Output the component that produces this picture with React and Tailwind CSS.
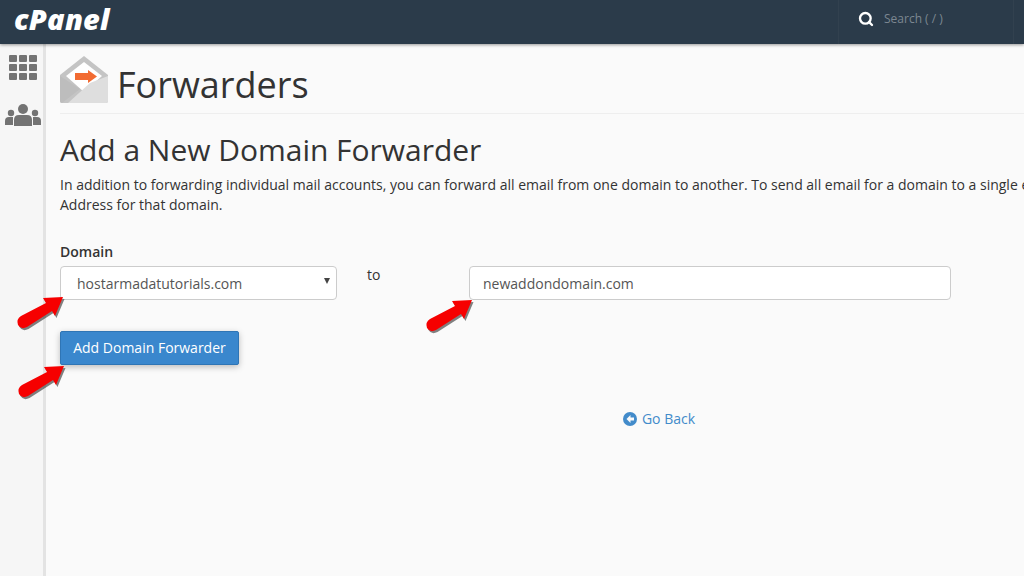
import { Search } from 'lucide-react'

// red callout arrow, tip at top right of its box
const ARROW_PATH = 'M5 22 L30 9 L27 4 L47 3 L39 22 L36 17 L11 33 Q5 36 2 31 Q0 25 5 22 Z'

const Arrow = ({ className }) => (
  <svg className={`absolute ${className}`} width="50" height="38" viewBox="0 0 50 38">
    <path d={ARROW_PATH} fill="#2e2e2e" opacity="0.6" transform="translate(1.5 2)" />
    <path d={ARROW_PATH} fill="#f60000" />
  </svg>
)

const EnvelopeIcon = () => (
  <svg width="48" height="48" viewBox="0 0 48 48" className="shrink-0">
    <path d="M0 19 L24 0 L48 19 L48 45 Q48 47 46 47 L2 47 Q0 47 0 45 Z" fill="#c4c4c4" />
    <path d="M6 20 L24 6 L42 20 L24 36 Z" fill="#ffffff" />
    <path d="M15 17 H28 V14 L37 20.5 L28 27 V24 H15 Z" fill="#f26b32" />
    <path d="M48 20 V45 Q48 47 46 47 H8 L30 27 Z" fill="#dedede" />
    <path d="M0 20 L20 33 L2 47 Q0 47 0 45 Z" fill="#bdbdbd" />
  </svg>
)

const AppsIcon = () => (
  <div className="grid grid-cols-3 gap-[2px]">
    {Array.from({ length: 9 }).map((_, i) => (
      <div key={i} className="w-[8px] h-[7px] rounded-[1px] bg-[#737373]" />
    ))}
  </div>
)

const UsersIcon = () => (
  <svg width="36" height="22" viewBox="0 0 36 22">
    <circle cx="18" cy="5" r="5" fill="#737373" />
    <path d="M9 22 V16 Q9 11 14 11 H22 Q27 11 27 16 V22 Z" fill="#737373" />
    <circle cx="6" cy="9" r="3.2" fill="#737373" />
    <path d="M0 21 V17 Q0 13 4 13 H8 V21 Z" fill="#737373" />
    <circle cx="30" cy="9" r="3.2" fill="#737373" />
    <path d="M36 21 V17 Q36 13 32 13 H28 V21 Z" fill="#737373" />
  </svg>
)

export default function App() {
  return (
    <div className="relative w-[1024px] h-[576px] overflow-hidden bg-[#fafafa] font-['Open_Sans',sans-serif] text-[#333]">
      {/* Top bar */}
      <header className="relative z-10 flex items-center justify-between h-[44px] bg-[#2b3b4a] shadow-[0_1px_3px_rgba(0,0,0,0.4)]">
        <span className="pl-[14px] -mt-[7px] text-[29px] leading-none font-extrabold italic tracking-[0.2px] text-white">
          cPanel
        </span>
        <div className="flex items-center h-full w-[176px] mr-[10px] pl-[19px] pb-[6px] gap-[10px] border-x border-[#32414f]">
          <Search size={16} strokeWidth={3.5} className="text-white" />
          <span className="text-[12px] text-[#7c8791]">Search ( / )</span>
        </div>
      </header>

      <div className="flex h-[532px]">
        {/* Side rail */}
        <aside className="flex flex-col items-center w-[46px] shrink-0 pt-[11px] pl-[2px] gap-[24px] bg-[#f6f6f6] border-r-[3px] border-[#e3e3e3]">
          <AppsIcon />
          <UsersIcon />
        </aside>

        <main className="flex-1 pl-[14px] min-w-0">
          {/* Page title */}
          <div className="flex items-center gap-[9px] h-[70px] pt-[12px] pb-[10px] border-b border-[#eeeeee]">
            <EnvelopeIcon />
            <h1 className="pt-[10px] text-[36px] leading-none whitespace-nowrap">Forwarders</h1>
          </div>

          <h2 className="mt-[18px] text-[30px] leading-[36px] tracking-[-0.02px] whitespace-nowrap">
            Add a New Domain Forwarder
          </h2>
          <p className="mt-[7px] text-[14px] leading-[20px] whitespace-nowrap">
            In addition to forwarding individual mail accounts, you can forward all email from one domain to another. To send all email for a domain to a single email address, create a Default
            <br />
            Address for that domain.
          </p>

          {/* Form */}
          <label className="block mt-[27px] text-[14px] leading-[20px] font-semibold">Domain</label>
          <div className="flex items-start mt-[4px]">
            <div className="relative w-[277px] h-[34px] shrink-0 flex items-center pl-[16px] bg-white border border-[#cccccc] rounded-[4px] text-[14px] text-[#555]">
              hostarmadatutorials.com
              <span className="absolute right-[6px] top-[11px] w-0 h-0 border-x-[3px] border-x-transparent border-t-[6px] border-t-[#444]" />
            </div>
            <span className="ml-[30px] w-[102px] shrink-0 text-[14px] leading-[20px] -mt-[1px]">to</span>
            <input
              readOnly
              value="newaddondomain.com"
              className="w-[482px] h-[34px] px-[13px] bg-white border border-[#cccccc] rounded-[4px] text-[14px] text-[#555] outline-none"
            />
          </div>

          <button className="block mt-[31px] w-[179px] h-[34px] pb-[1px] bg-[#3a87cd] border border-[#2f75b5] rounded-[2px] text-[14px] text-white shadow-[0_2px_6px_rgba(0,0,0,0.25)]">
            Add Domain Forwarder
          </button>

          <div className="flex items-center justify-center gap-[5px] mt-[44px] w-[1198px]">
            <svg width="14" height="14" viewBox="0 0 14 14" className="shrink-0">
              <circle cx="7" cy="7" r="7" fill="#428bca" />
              <path d="M7.5 3 L3.5 7 L7.5 11 V8.5 H11 V5.5 H7.5 Z" fill="#fafafa" />
            </svg>
            <span className="text-[14px] leading-[20px] text-[#428bca]">Go Back</span>
          </div>
        </main>
      </div>

      {/* Annotation arrows */}
      <Arrow className="left-[16px] top-[294px]" />
      <Arrow className="left-[17px] top-[363px]" />
      <Arrow className="left-[425px] top-[297px]" />
    </div>
  )
}
